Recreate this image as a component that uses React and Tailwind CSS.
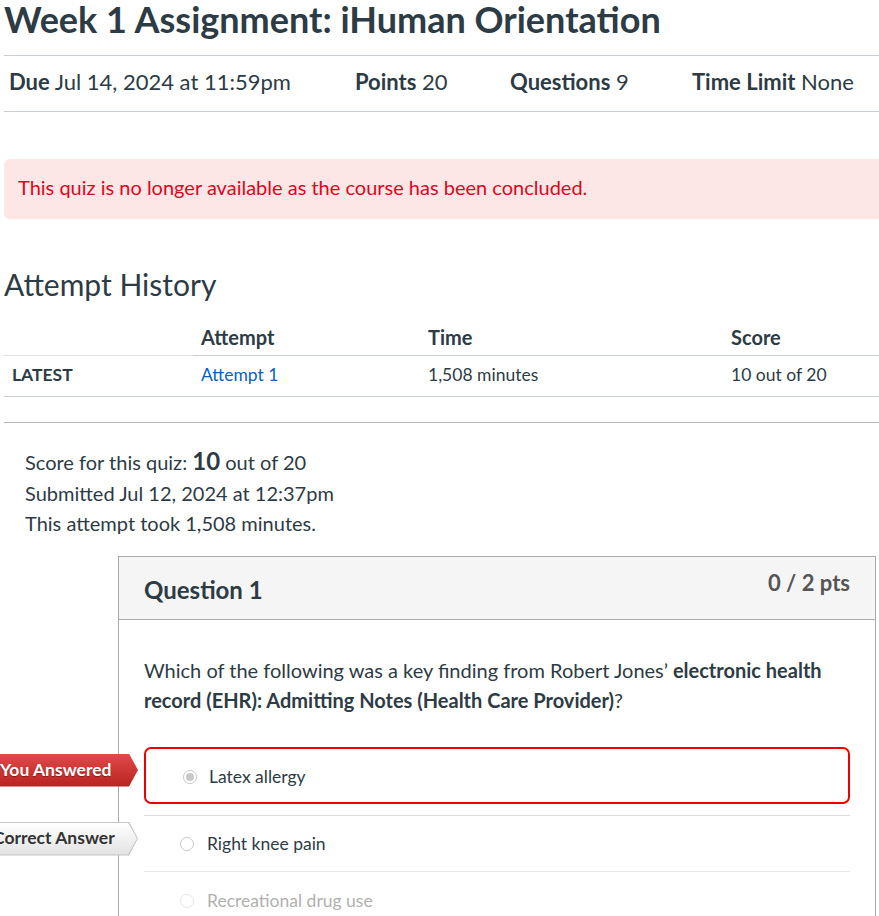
import React from "react";

function Radio({ checked, faded }) {
  return (
    <span
      className={
        "inline-flex items-center justify-center w-[14px] h-[14px] rounded-full border bg-white shrink-0 " +
        (faded ? "border-[#e6e6e6]" : "border-[#c8c8c8]")
      }
    >
      {checked && <span className="w-[8px] h-[8px] rounded-full bg-[#c8c8c8]" />}
    </span>
  );
}

export default function App() {
  return (
    <div className="w-full overflow-hidden bg-white text-[#2d3b45] font-['Lato','Noto_Sans',sans-serif]">
      <div className="w-[940px] pl-[4px]">
        <h1 className="text-[36px] font-bold leading-[38px] pt-0 text-[#2d3b45]">
          Week 1 Assignment: iHuman Orientation
        </h1>

        <div className="mt-[17px] border-t border-b border-[#c7cdd1] h-[57px] flex items-center pb-[4px] pl-[5px] text-[22px]">
          <div className="w-[346px]"><span className="font-bold">Due</span> Jul 14, 2024 at 11:59pm</div>
          <div className="w-[155px]"><span className="font-bold">Points</span> 20</div>
          <div className="w-[182px]"><span className="font-bold">Questions</span> 9</div>
          <div><span className="font-bold">Time Limit</span> None</div>
        </div>

        <div className="mt-[47px] h-[60px] bg-[#fce6e6] rounded-l-[6px] flex items-center pb-[4px] pl-[14px] text-[20px] text-[#e0061f]">
          This quiz is no longer available as the course has been concluded.
        </div>

        <h2 className="mt-[47px] text-[30px] leading-[36px] font-normal">Attempt History</h2>

        <div className="mt-[15px] w-[875px]">
          <div className="flex h-[39px] items-center pt-[1px] text-[20px] font-bold border-b border-[#c7cdd1]">
            <div className="w-[189px] self-stretch border-b border-[#e2e2e2] -mb-px"></div>
            <div className="w-[227px] pl-[8px]">Attempt</div>
            <div className="w-[303px] pl-[8px]">Time</div>
            <div className="flex-1 pl-[8px]">Score</div>
          </div>
          <div className="flex h-[41px] items-center pb-[1px] text-[17.5px] border-b border-[#c7cdd1]">
            <div className="w-[189px] pl-[8px] font-bold">LATEST</div>
            <div className="w-[227px] pl-[8px] text-[#0b5fc6]">Attempt 1</div>
            <div className="w-[303px] pl-[8px]">1,508 minutes</div>
            <div className="flex-1 pl-[8px]">10 out of 20</div>
          </div>
        </div>

        <div className="mt-[25px] border-t border-[#b5b5b5]"></div>

        <div className="pl-[21px] pt-[23px] text-[20px] leading-[30.5px]">
          <div>
            Score for this quiz: <span className="font-bold text-[24px]">10</span> out of 20
          </div>
          <div>Submitted Jul 12, 2024 at 12:37pm</div>
          <div>This attempt took 1,508 minutes.</div>
        </div>

        <div className="ml-[114px] mt-[17px] w-[758px] border border-[#aaaaaa]">
          <div className="h-[63px] bg-[#f5f5f5] border-b border-[#aaaaaa] flex justify-between px-[25px]">
            <div className="pt-[17px] text-[24px] font-bold leading-[32px]">Question 1</div>
            <div className="pt-[11px] text-[22px] font-bold leading-[30px] text-[#555555]">0 / 2 pts</div>
          </div>
          <div className="px-[25px] pt-[35px] text-[20px] leading-[30px]">
            Which of the following was a key finding from Robert Jones’{" "}
            <span className="font-bold">electronic health record (EHR): Admitting Notes (Health Care Provider)</span>?
          </div>
          <div className="px-[25px] pt-[32px]">
            <div className="relative">
              <div className="absolute left-[-145px] top-[7px] h-[33px] w-[139px] [clip-path:polygon(0_0,calc(100%-9px)_0,100%_50%,calc(100%-9px)_100%,0_100%)] bg-gradient-to-b from-[#e04a48] to-[#b8211f] flex items-center">
                <span className="text-white font-bold text-[17.5px] pl-[1px] [text-shadow:0_1px_1px_rgba(0,0,0,0.35)]">You Answered</span>
              </div>
              <div className="h-[57px] border-2 border-[#ee0000] rounded-[7px] flex items-center pt-[4px] pl-[37px] gap-[12px] text-[17.5px]">
                <Radio checked />
                <span>Latex allergy</span>
              </div>
            </div>
            <div className="mt-[11px] border-t border-[#dddddd]"></div>
            <div className="relative h-[55px] flex items-center pt-[2px] pl-[36px] gap-[13px] text-[17.5px]">
              <div className="absolute left-[-145px] top-[6px] h-[34px] w-[139px] [clip-path:polygon(0_0,calc(100%-9px)_0,100%_50%,calc(100%-9px)_100%,0_100%)] bg-[#c4c4c4]">
                <div className="absolute left-0 top-[1px] bottom-[1px] right-[1px] [clip-path:polygon(0_0,calc(100%-9px)_0,100%_50%,calc(100%-9px)_100%,0_100%)] bg-gradient-to-b from-[#ffffff] to-[#e2e2e2] flex items-center">
                  <span className="text-[#333333] font-bold text-[17.5px] -ml-[6px]">Correct Answer</span>
                </div>
              </div>
              <Radio />
              <span>Right knee pain</span>
            </div>
            <div className="border-t border-[#e8e8e8]"></div>
            <div className="h-[56px] flex items-center pt-[3px] pl-[36px] gap-[13px] text-[17.5px] text-[#b0b0b0]">
              <Radio faded />
              <span>Recreational drug use</span>
            </div>
          </div>
        </div>
      </div>
    </div>
  );
}
